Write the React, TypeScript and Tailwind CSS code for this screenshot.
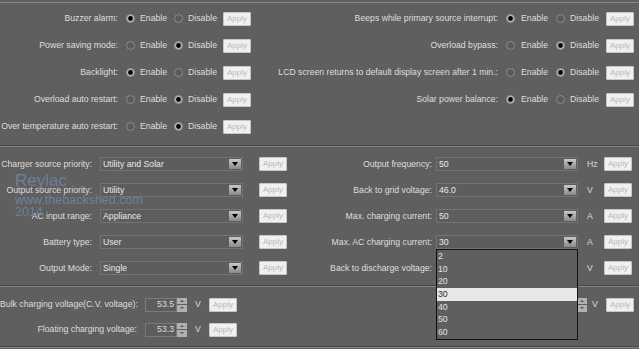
import React from 'react'

const Radio = ({ on }: { on: boolean }) => (
  <svg width="9" height="9" viewBox="0 0 9 9" className="shrink-0">
    <circle cx="4.5" cy="4.5" r="4" fill={on ? '#bdbdbd' : '#5a5a5a'} stroke="#8c8c8c" strokeWidth="1" />
    {on && <circle cx="4.5" cy="4.5" r="2.4" fill="#000" />}
  </svg>
)

const Apply = () => (
  <span className="w-[28px] h-[14px] shrink-0 flex items-center justify-center bg-[#f0f0f0] border border-[#c6c6c6] rounded-[1px] text-[8px] text-[#b8b8b8]">
    Apply
  </span>
)

const Arrow = () => (
  <span className="w-[12px] h-[10px] mr-[1px] shrink-0 bg-gradient-to-b from-[#c8c8c8] to-[#8a8a8a] flex items-center justify-center">
    <svg width="6" height="4" viewBox="0 0 6 4">
      <path d="M0 0h6L3 4z" fill="#000" />
    </svg>
  </span>
)

const Spinner = () => (
  <span className="w-[10px] h-[14px] shrink-0 flex flex-col gap-px">
    <span className="flex-1 bg-[#b0b0b0] flex items-center justify-center">
      <svg width="4" height="2" viewBox="0 0 4 2"><path d="M0 2h4L2 0z" fill="#555" /></svg>
    </span>
    <span className="flex-1 bg-[#b0b0b0] flex items-center justify-center">
      <svg width="4" height="2" viewBox="0 0 4 2"><path d="M0 0h4L2 2z" fill="#555" /></svg>
    </span>
  </span>
)

const Divider = () => (
  <div>
    <div className="h-px bg-[#474747]" />
    <div className="h-px bg-[#858585]" />
  </div>
)

type Toggle = { label: string; on: boolean }

const leftToggles: Toggle[] = [
  { label: 'Buzzer alarm:', on: true },
  { label: 'Power saving mode:', on: false },
  { label: 'Backlight:', on: true },
  { label: 'Overload auto restart:', on: false },
  { label: 'Over temperature auto restart:', on: false },
]

const rightToggles: Toggle[] = [
  { label: 'Beeps while primary source interrupt:', on: true },
  { label: 'Overload bypass:', on: false },
  { label: 'LCD screen returns to default display screen after 1 min.:', on: false },
  { label: 'Solar power balance:', on: true },
]

const leftSelects = [
  ['Charger source priority:', 'Utility and Solar'],
  ['Output source priority:', 'Utility'],
  ['AC input range:', 'Appliance'],
  ['Battery type:', 'User'],
  ['Output Mode:', 'Single'],
]

const rightSelects = [
  ['Output frequency:', '50', 'Hz'],
  ['Back to grid voltage:', '46.0', 'V'],
  ['Max. charging current:', '50', 'A'],
  ['Max. AC charging current:', '30', 'A'],
  ['Back to discharge voltage:', '', 'V'],
]

const options = ['2', '10', '20', '30', '40', '50', '60']

export default function App() {
  return (
    <div className="relative w-[639px] h-[349px] overflow-hidden bg-[#5f5f5f] text-[8.7px] text-[#dedede] font-['Liberation_Sans',Arial,sans-serif] leading-none">
      <div className="h-[2px]" />
      <div className="h-px bg-[#8a8a8a]" />

      {/* on / off settings */}
      <div className="flex pt-[2px] pb-[5px]">
        <div className="w-[260px]">
          {leftToggles.map((t) => (
            <div key={t.label} className="h-[27px] flex items-center">
              <span className="w-[126px] pr-[8px] text-right whitespace-nowrap">{t.label}</span>
              <span className="w-[48px] flex items-center gap-[5px]">
                <Radio on={t.on} />
                Enable
              </span>
              <span className="w-[49px] flex items-center gap-[5px]">
                <Radio on={!t.on} />
                Disable
              </span>
              <Apply />
            </div>
          ))}
        </div>
        <div className="flex-1">
          {rightToggles.map((t) => (
            <div key={t.label} className="h-[27px] flex items-center">
              <span className="w-[246px] pr-[8px] text-right whitespace-nowrap">{t.label}</span>
              <span className="w-[50px] flex items-center gap-[6px]">
                <Radio on={t.on} />
                Enable
              </span>
              <span className="w-[50px] flex items-center gap-[5px]">
                <Radio on={!t.on} />
                Disable
              </span>
              <Apply />
            </div>
          ))}
        </div>
      </div>
      <Divider />

      {/* select settings */}
      <div className="flex pt-[4px] pb-[4px]">
        <div className="w-[290px]">
          {leftSelects.map(([label, value]) => (
            <div key={label} className="h-[26px] flex items-center">
              <span className="w-[100px] pr-[8px] text-right whitespace-nowrap">{label}</span>
              <div className="w-[143px] h-[14px] border border-[#737373] bg-[#5d5d5d] flex items-center pl-[2px]">
                <span className="flex-1 text-[#e8e8e8]">{value}</span>
                <Arrow />
              </div>
              <span className="ml-[16px]">
                <Apply />
              </span>
            </div>
          ))}
        </div>
        <div className="flex-1">
          {rightSelects.map(([label, value, unit]) => (
            <div key={label} className="h-[26px] flex items-center">
              <span className="w-[146px] pr-[4px] text-right whitespace-nowrap">{label}</span>
              <div className="relative w-[142px] h-[14px] border border-[#737373] bg-[#5d5d5d] flex items-center pl-[2px]">
                <span className="flex-1 text-[#e8e8e8]">{value}</span>
                <Arrow />
                {label === 'Max. AC charging current:' && (
                  <div className="absolute z-10 left-[-1px] right-[-1px] top-[13px] border border-[#111] bg-[#5f5f5f]">
                    {options.map((o) => (
                      <div
                        key={o}
                        className={
                          o === '30'
                            ? 'h-[12.7px] flex items-center pl-[1px] bg-[#e8e8e8] text-[#2a2a2a]'
                            : 'h-[12.7px] flex items-center pl-[1px] text-[#e2e2e2]'
                        }
                      >
                        {o}
                      </div>
                    ))}
                  </div>
                )}
              </div>
              <span className="w-[26px] pl-[9px]">{unit}</span>
              <Apply />
            </div>
          ))}
        </div>
      </div>
      <Divider />

      {/* numeric settings */}
      <div className="pt-[5px] pb-[4px]">
        <div className="h-[25px] flex items-center">
          <span className="w-[145px] pr-[8px] text-right whitespace-nowrap">Bulk charging voltage(C.V. voltage):</span>
          <span className="w-[32px] h-[14px] border border-[#7a7a7a] bg-[#5d5d5d] flex items-center justify-end pr-[2px]">53.5</span>
          <Spinner />
          <span className="w-[22px] pl-[8px]">V</span>
          <Apply />
          <span className="ml-auto w-[7px] h-[14px]">
            <Spinner />
          </span>
          <span className="w-[22px] pl-[8px]">V</span>
          <span className="mr-[5px]">
            <Apply />
          </span>
        </div>
        <div className="h-[25px] flex items-center">
          <span className="w-[145px] pr-[8px] text-right whitespace-nowrap">Floating charging voltage:</span>
          <span className="w-[32px] h-[14px] border border-[#7a7a7a] bg-[#5d5d5d] flex items-center justify-end pr-[2px]">53.3</span>
          <Spinner />
          <span className="w-[22px] pl-[8px]">V</span>
          <Apply />
        </div>
      </div>
      <Divider />

      {/* watermark */}
      <div className="absolute left-[15px] top-[172px] text-[#7088a3] opacity-85 pointer-events-none">
        <div className="text-[17px] leading-[18px]">Reylac</div>
        <div className="text-[12.5px] leading-[11px] mt-[5px]">www.thebackshed.com</div>
        <div className="text-[12.5px] leading-[11px] mt-[1px]">2014</div>
      </div>
    </div>
  )
}
